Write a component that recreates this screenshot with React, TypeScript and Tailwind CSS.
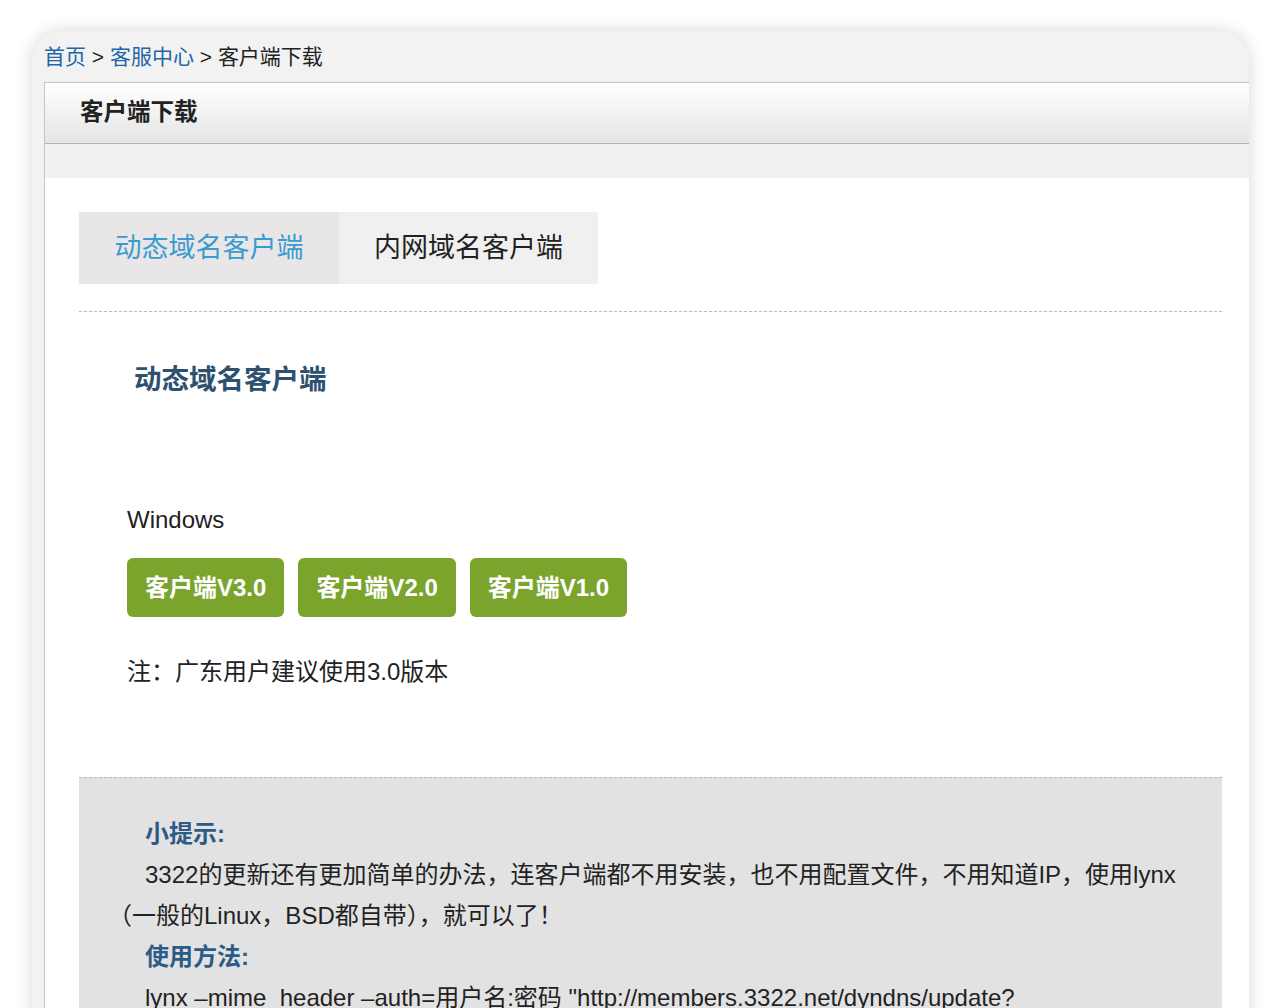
import React from 'react';

const font = { fontFamily: '"Liberation Sans", "Noto Sans CJK SC", sans-serif' };

const versions = ['客户端V3.0', '客户端V2.0', '客户端V1.0'];

const App = () => {
  return (
    <div className="min-h-screen bg-white pt-[31px] pl-[32px] overflow-hidden" style={font}>
      <div className="w-[1217px] h-[1100px] bg-[#f2f2f2] rounded-t-[30px] shadow-[0_0_18px_rgba(0,0,0,0.16)]">
        {/* breadcrumb */}
        <div className="h-[51px] pl-[12px] pt-[11px] text-[21px] leading-[30px] text-[#222]">
          <a className="text-[#2466a5]">首页</a>
          <span> &gt; </span>
          <a className="text-[#2466a5]">客服中心</a>
          <span> &gt; </span>
          <span>客户端下载</span>
        </div>

        <div className="ml-[12px] border-l border-t border-[#c4c4c4] bg-white">
          <div className="h-[61px] flex items-center pl-[35px] bg-gradient-to-b from-white to-[#e5e5e5] border-b border-[#b5b5b5]">
            <h1 className="text-[23.5px] font-bold text-[#222]">客户端下载</h1>
          </div>
          <div className="h-[34px] bg-[#f1f1f1]" />

          <div className="pl-[34px] pr-[27px] pt-[34px] pb-10">
            {/* tabs */}
            <div className="flex">
              <button className="w-[260px] h-[72px] bg-[#e8e6e7] text-[27px] text-[#3a9bd0]">动态域名客户端</button>
              <button className="w-[259px] h-[72px] bg-[#f0f0f0] text-[27px] text-[#222]">内网域名客户端</button>
            </div>
            <div className="mt-[27px] border-t border-dashed border-[#bcbcbc]" />

            <h2 className="mt-[48px] ml-[55px] text-[27.5px] leading-[40px] font-bold text-[#2e5170]">动态域名客户端</h2>

            <div className="ml-[48px]">
              <p className="mt-[105px] text-[24px] leading-[30px] text-[#222]">Windows</p>
              <div className="mt-[23px] flex gap-[14px]">
                {versions.map((v) => (
                  <button
                    key={v}
                    className="h-[59px] px-[18px] rounded-[6px] bg-[#7ba42d] text-white text-[24px] font-bold"
                  >
                    {v}
                  </button>
                ))}
              </div>
              <p className="mt-[40px] text-[24px] leading-[30px] text-[#222]">注：广东用户建议使用3.0版本</p>
            </div>

            {/* tips */}
            <div className="mt-[90px] border-t border-dashed border-[#b5b5b5] bg-[#e2e2e2] pl-[29px] pt-[35px] pb-10 text-[24px] leading-[41px] text-[#222]">
              <p className="indent-[37px] font-bold text-[#2d5b88]">小提示:</p>
              <p className="indent-[37px] whitespace-nowrap">3322的更新还有更加简单的办法，连客户端都不用安装，也不用配置文件，不用知道IP，使用lynx</p>
              <p className="whitespace-nowrap">（一般的Linux，BSD都自带），就可以了！</p>
              <p className="indent-[37px] font-bold text-[#2d5b88]">使用方法:</p>
              <p className="indent-[37px] whitespace-nowrap">lynx –mime_header –auth=用户名:密码 "http://members.3322.net/dyndns/update?</p>
            </div>
          </div>
        </div>
      </div>
    </div>
  );
};

export default App;
